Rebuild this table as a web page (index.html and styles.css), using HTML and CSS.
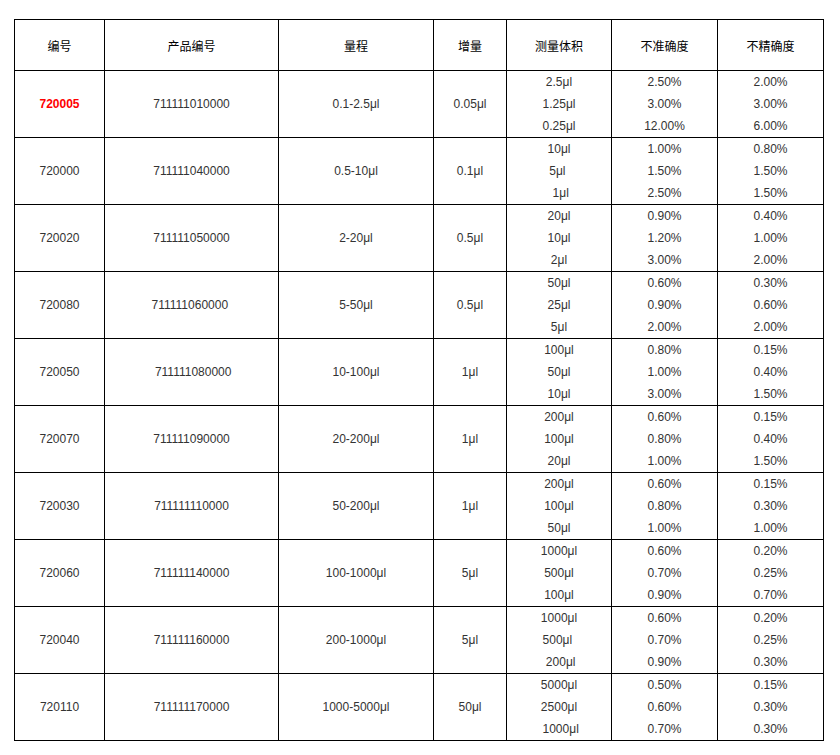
FILE: index.html
```html
<!DOCTYPE html>
<html lang="zh">
<head>
<meta charset="utf-8">
<title>移液器规格</title>
<link rel="stylesheet" href="styles.css">
</head>
<body>
<div class="page">
<table class="spec">
  <colgroup>
    <col class="c1"><col class="c2"><col class="c3"><col class="c4"><col class="c5"><col class="c6"><col class="c7">
  </colgroup>
  <thead>
    <tr><th>编号</th><th>产品编号</th><th>量程</th><th>增量</th><th>测量体积</th><th>不准确度</th><th>不精确度</th></tr>
  </thead>
  <tbody>
    <tr><td class="hl">720005</td><td>711111010000</td><td>0.1-2.5μl</td><td>0.05μl</td>
      <td><p>2.5μl</p><p>1.25μl</p><p>0.25μl</p></td>
      <td><p>2.50%</p><p>3.00%</p><p>12.00%</p></td>
      <td><p>2.00%</p><p>3.00%</p><p>6.00%</p></td></tr>
    <tr><td>720000</td><td>711111040000</td><td>0.5-10μl</td><td>0.1μl</td>
      <td><p>10μl</p><p>5μl&nbsp;</p><p>&nbsp;1μl</p></td>
      <td><p>1.00%</p><p>1.50%</p><p>2.50%</p></td>
      <td><p>0.80%</p><p>1.50%</p><p>1.50%</p></td></tr>
    <tr><td>720020</td><td>711111050000</td><td>2-20μl</td><td>0.5μl</td>
      <td><p>20μl</p><p>10μl</p><p>2μl</p></td>
      <td><p>0.90%</p><p>1.20%</p><p>3.00%</p></td>
      <td><p>0.40%</p><p>1.00%</p><p>2.00%</p></td></tr>
    <tr><td>720080</td><td>711111060000&nbsp;</td><td>5-50μl</td><td>0.5μl</td>
      <td><p>50μl</p><p>25μl</p><p>5μl</p></td>
      <td><p>0.60%</p><p>0.90%</p><p>2.00%</p></td>
      <td><p>0.30%</p><p>0.60%</p><p>2.00%</p></td></tr>
    <tr><td>720050</td><td>&nbsp;711111080000</td><td>10-100μl</td><td>1μl</td>
      <td><p>100μl</p><p>50μl</p><p>10μl</p></td>
      <td><p>0.80%</p><p>1.00%</p><p>3.00%</p></td>
      <td><p>0.15%</p><p>0.40%</p><p>1.50%</p></td></tr>
    <tr><td>720070</td><td>711111090000</td><td>20-200μl</td><td>1μl</td>
      <td><p>200μl</p><p>100μl</p><p>20μl</p></td>
      <td><p>0.60%</p><p>0.80%</p><p>1.00%</p></td>
      <td><p>0.15%</p><p>0.40%</p><p>1.50%</p></td></tr>
    <tr><td>720030</td><td>711111110000</td><td>50-200μl</td><td>1μl</td>
      <td><p>200μl</p><p>100μl</p><p>50μl</p></td>
      <td><p>0.60%</p><p>0.80%</p><p>1.00%</p></td>
      <td><p>0.15%</p><p>0.30%</p><p>1.00%</p></td></tr>
    <tr><td>720060</td><td>711111140000</td><td>100-1000μl</td><td>5μl</td>
      <td><p>1000μl</p><p>500μl</p><p>100μl</p></td>
      <td><p>0.60%</p><p>0.70%</p><p>0.90%</p></td>
      <td><p>0.20%</p><p>0.25%</p><p>0.70%</p></td></tr>
    <tr><td>720040</td><td>711111160000</td><td>200-1000μl</td><td>5μl</td>
      <td><p>1000μl</p><p>500μl&nbsp;</p><p>&nbsp;200μl</p></td>
      <td><p>0.60%</p><p>0.70%</p><p>0.90%</p></td>
      <td><p>0.20%</p><p>0.25%</p><p>0.30%</p></td></tr>
    <tr><td>720110</td><td>711111170000</td><td>1000-5000μl</td><td>50μl</td>
      <td><p>5000μl</p><p>2500μl</p><p>&nbsp;1000μl</p></td>
      <td><p>0.50%</p><p>0.60%</p><p>0.70%</p></td>
      <td><p>0.15%</p><p>0.30%</p><p>0.30%</p></td></tr>
  </tbody>
</table>
</div>
</body>
</html>
```
FILE: styles.css
```css
html, body {
  margin: 0;
  padding: 0;
  background: #fff;
}
.page {
  padding: 19px 0 0 14px;
}
.spec {
  border-collapse: collapse;
  table-layout: fixed;
  width: 810px;
  font-family: "Liberation Sans", Arial, "Noto Sans CJK SC", sans-serif;
  font-size: 12px;
  color: #333;
}
.c1 { width: 90px; }
.c2 { width: 174px; }
.c3 { width: 155px; }
.c4 { width: 73px; }
.c5 { width: 105px; }
.c6 { width: 106px; }
.c7 { width: 106px; }
.spec th,
.spec td {
  border: 1px solid #000;
  padding: 0;
  text-align: center;
  vertical-align: middle;
  white-space: pre;
}
.spec th {
  height: 50px;
  font-weight: normal;
  font-family: "Liberation Sans", "Noto Sans CJK SC", sans-serif;
  color: #000;
}
.spec td {
  height: 66px;
  line-height: 22px;
}
.spec p {
  margin: 0;
  line-height: 22px;
}
.spec .hl {
  color: #f00;
  font-weight: bold;
}
```
